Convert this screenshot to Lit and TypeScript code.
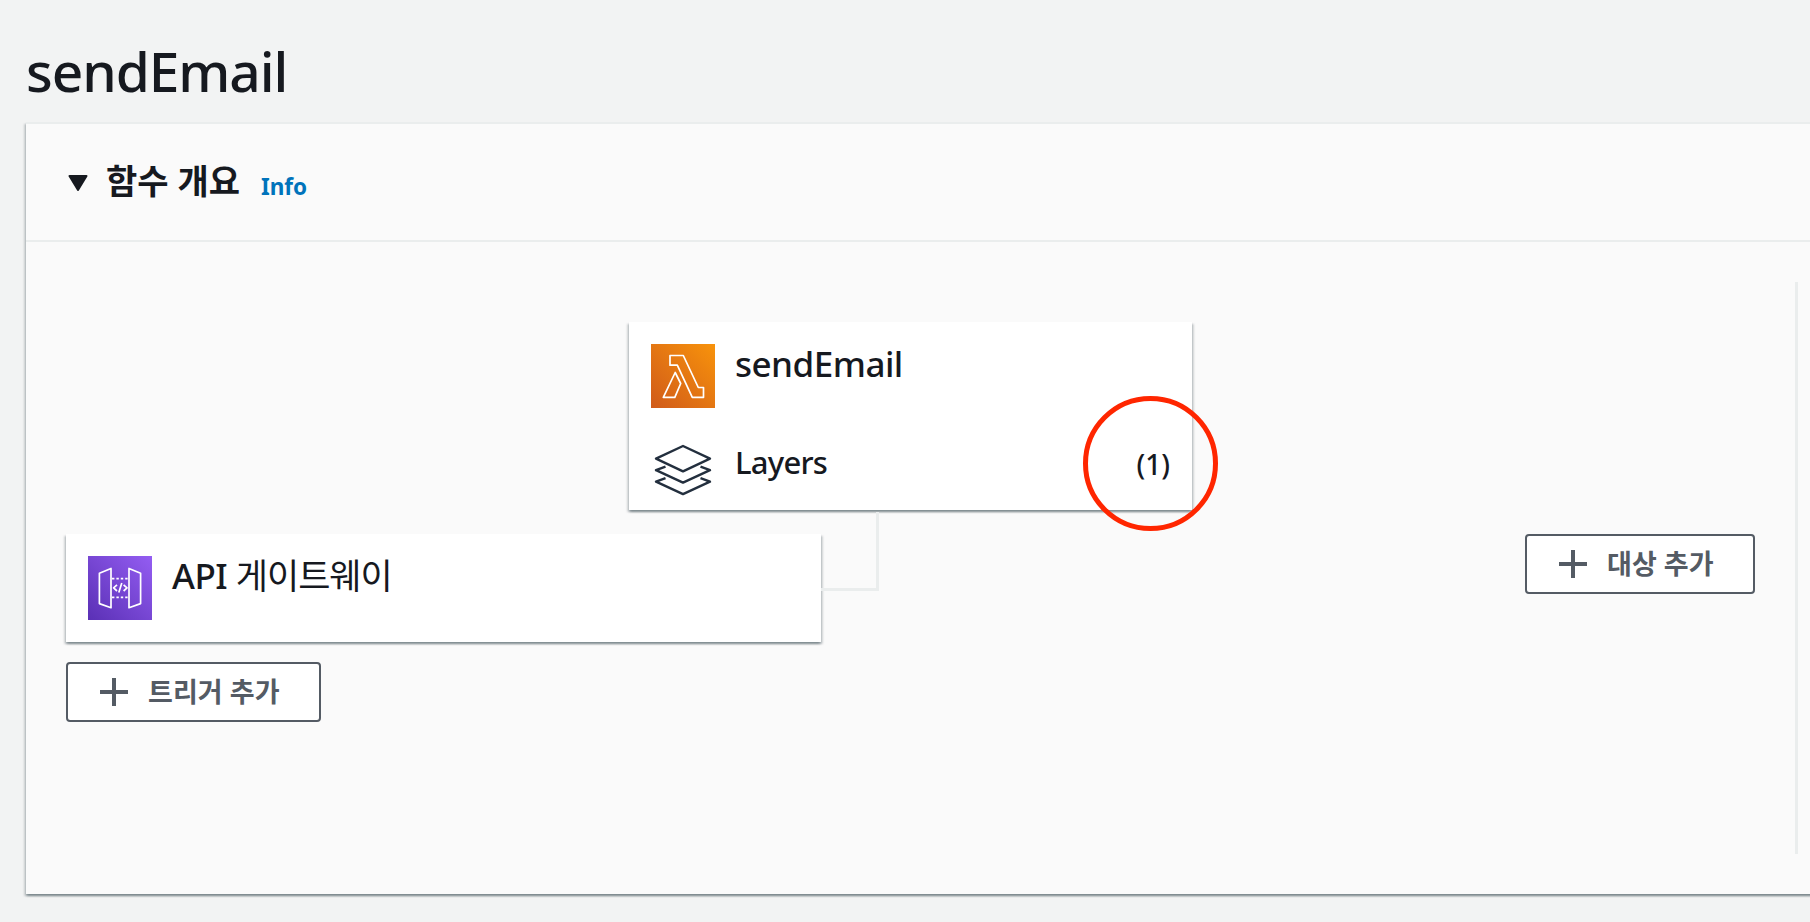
import { LitElement, html, css, svg } from "lit";
import { customElement, property } from "lit/decorators.js";

const lambdaIcon = svg`
  <svg width="64" height="64" viewBox="0 0 64 64" fill="none">
    <defs>
      <linearGradient id="orange" x1="0" y1="64" x2="64" y2="0" gradientUnits="userSpaceOnUse">
        <stop offset="0" stop-color="#d05a1a" />
        <stop offset="1" stop-color="#f8930b" />
      </linearGradient>
    </defs>
    <rect width="64" height="64" fill="url(#orange)" />
    <path d="M19 11.5H32.3L47.3 43.5H52.5V53.3H41.3L26.3 21.2H19Z" stroke="#fff" stroke-width="1.7" stroke-linejoin="round" />
    <path d="M24.2 28.5L29.7 39.5L23.8 53.3H12.3Z" stroke="#fff" stroke-width="1.7" stroke-linejoin="round" />
  </svg>`;

const gatewayIcon = svg`
  <svg width="64" height="64" viewBox="0 0 64 64" fill="none">
    <defs>
      <linearGradient id="violet" x1="0" y1="64" x2="64" y2="0" gradientUnits="userSpaceOnUse">
        <stop offset="0" stop-color="#5a30b5" />
        <stop offset="1" stop-color="#945df2" />
      </linearGradient>
    </defs>
    <rect width="64" height="64" fill="url(#violet)" />
    <g stroke="#fff" stroke-width="1.7" stroke-linejoin="round">
      <path d="M11.4 17.2L23 12.5V51.7L11.4 47.6Z" />
      <path d="M52.6 17.2L41 12.5V51.7L52.6 47.6Z" />
      <path d="M24 22.7H40M24 41.3H40" stroke-dasharray="2.4 2" />
      <path d="M29 28.8L25.6 31.9L29 35M35.6 28.8L39 31.9L35.6 35M33.8 27L30.8 36.4" />
    </g>
  </svg>`;

const layersIcon = svg`
  <svg width="64" height="64" viewBox="0 0 64 64" fill="none" stroke="#232f3e" stroke-width="2.4" stroke-linejoin="round">
    <path d="M32 10L59 22.6L32 35.3L5 22.6Z" />
    <path d="M14.5 30.6L5 34.2L32 46.6L59 34.2L49.5 30.6" />
    <path d="M14.5 42.2L5 45.7L32 58.1L59 45.7L49.5 42.2" />
  </svg>`;

@customElement("add-button")
class AddButton extends LitElement {
  @property() label = "";
  static styles = css`
    :host {
      display: block;
    }
    .button {
      box-sizing: border-box;
      display: flex;
      align-items: center;
      width: 100%;
      height: 60px;
      padding: 0 0 0 32px;
      gap: 20px;
      border: 2px solid #545b64;
      border-radius: 4px;
      background: #fff;
      color: #545b64;
      font: 700 27px/56px "Noto Sans", "Noto Sans CJK KR", sans-serif;
      white-space: nowrap;
    }
    .plus {
      flex: none;
      display: block;
    }
    .label {
      letter-spacing: 0.05px;
    }
  `;
  render() {
    return html`<button class="button">
      <svg class="plus" width="28" height="28" viewBox="0 0 28 28">
        <path d="M12 0h4v12h12v4H16v12h-4V16H0v-4h12z" fill="#545b64" />
      </svg>
      <span class="label">${this.label}</span>
    </button>`;
  }
}

@customElement("app-root")
class AppRoot extends LitElement {
  static styles = css`
    :host {
      display: block;
      box-sizing: border-box;
      height: 922px;
      overflow: hidden;
      background: #f2f3f3;
      color: #16191f;
      font-family: "Noto Sans", "Noto Sans CJK KR", sans-serif;
      padding-left: 26px;
    }
    .title {
      margin: 0;
      height: 122px;
      font-size: 55px;
      font-weight: 500;
      line-height: 142px;
      letter-spacing: -1.05px;
      white-space: nowrap;
    }
    .panel {
      box-sizing: border-box;
      height: 772px;
      margin-right: -10px;
      border-top: 2px solid #eaeded;
      background: #fafafa;
    }
    .panel,
    .card {
      box-shadow:
        0 2px 2px 0 rgba(0, 28, 36, 0.3),
        2px 2px 2px 0 rgba(0, 28, 36, 0.15),
        -2px 2px 2px 0 rgba(0, 28, 36, 0.15);
    }
    .header {
      display: flex;
      align-items: flex-start;
      box-sizing: border-box;
      height: 118px;
      padding-left: 42px;
      border-bottom: 2px solid #eaeded;
      line-height: 114px;
      white-space: nowrap;
    }
    .caret {
      width: 20px;
      height: 16px;
      margin: 51px 18px 0 0;
    }
    .heading {
      margin: 0;
      font-size: 34px;
      font-weight: 700;
    }
    .info {
      margin: 5px 0 0 21px;
      color: #0073bb;
      font-size: 22.5px;
      font-weight: 700;
      line-height: 116px;
    }
    .body {
      display: flex;
      justify-content: space-between;
      height: 652px;
      box-sizing: border-box;
      padding: 40px 22px 40px 40px;
    }
    .diagram {
      width: 1689px;
      padding-top: 40px;
    }
    .split {
      width: 3px;
      background: #eaeded;
    }
    .card {
      box-sizing: border-box;
      background: #fff;
      padding: 22px;
    }
    .function {
      width: 563px;
      height: 188px;
      margin-left: 563px;
    }
    .line {
      display: flex;
      align-items: flex-start;
      height: 64px;
      white-space: nowrap;
    }
    .line svg {
      flex: none;
    }
    .name {
      margin-left: 20px;
      font-size: 35px;
      font-weight: 500;
      line-height: 40px;
      letter-spacing: -0.5px;
    }
    .hangul {
      font-weight: 400;
      letter-spacing: -1px;
    }
    .layers {
      margin-top: 28px;
    }
    .layers .name {
      font-size: 31px;
      line-height: 52px;
      letter-spacing: -0.75px;
    }
    .count {
      margin-left: auto;
      font-size: 28px;
      font-weight: 500;
      line-height: 56px;
      position: relative;
    }
    .ring {
      position: absolute;
      left: 50%;
      top: 50%;
      width: 125px;
      height: 125px;
      margin: -68px 0 0 -70px;
      border: 5px solid #ff2600;
      border-radius: 50%;
    }
    .flow {
      display: flex;
      align-items: flex-start;
      margin-top: 24px;
    }
    .triggers {
      width: 755px;
    }
    .trigger {
      height: 108px;
      margin-bottom: 20px;
    }
    .link {
      box-sizing: border-box;
      width: 58px;
      height: 79px;
      margin-top: -22px;
      border: solid #eaeded;
      border-width: 0 3px 3px 0;
    }
    .add-trigger {
      width: 255px;
    }
    .add-target {
      width: 230px;
      margin-left: auto;
    }
  `;

  render() {
    return html`
      <h1 class="title">sendEmail</h1>
      <section class="panel">
        <header class="header">
          <svg class="caret" viewBox="0 0 20 16">
            <path d="M1.5 1H18.5L10 15Z" fill="#16191f" stroke="#16191f" stroke-width="2" stroke-linejoin="round" />
          </svg>
          <h2 class="heading">함수 개요</h2>
          <a class="info">Info</a>
        </header>
        <div class="body">
          <div class="diagram">
            <div class="card function">
              <div class="line">${lambdaIcon}<span class="name">sendEmail</span></div>
              <div class="line layers">
                ${layersIcon}<span class="name">Layers</span>
                <span class="count">(1)<i class="ring"></i></span>
              </div>
            </div>
            <div class="flow">
              <div class="triggers">
                <div class="card trigger">
                  <div class="line">${gatewayIcon}<span class="name">API <span class="hangul">게이트웨이</span></span></div>
                </div>
                <add-button class="add-trigger" label="트리거 추가"></add-button>
              </div>
              <div class="link"></div>
              <add-button class="add-target" label="대상 추가"></add-button>
            </div>
          </div>
          <div class="split"></div>
        </div>
      </section>
    `;
  }
}
